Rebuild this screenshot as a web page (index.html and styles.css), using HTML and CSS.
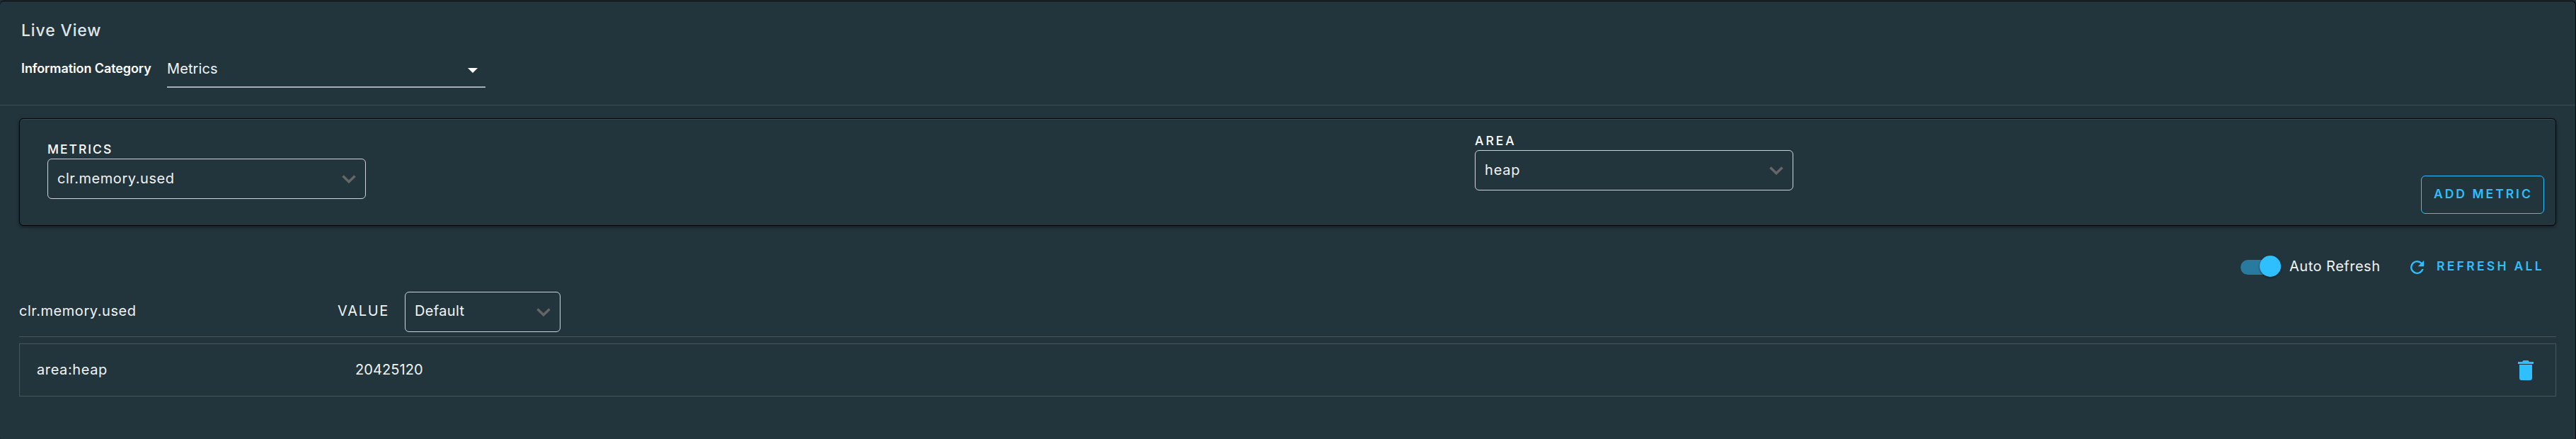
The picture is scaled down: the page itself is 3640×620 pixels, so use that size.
FILE: index.html
```html
<!DOCTYPE html>
<html lang="en">
<head>
<meta charset="utf-8">
<title>Live View</title>
<link rel="stylesheet" href="styles.css">
</head>
<body>
<main class="panel">
  <header class="head">
    <h1 class="title">Live View</h1>
    <div class="category">
      <label class="category-label">Information Category</label>
      <div class="category-select"><span class="t-category">Metrics</span><svg class="caret" viewBox="0 0 14 7"><path d="M0 0h14L7 7z"/></svg></div>
    </div>
  </header>
  <section class="body">
    <div class="card">
      <div class="field field-metrics">
        <label class="field-label">METRICS</label>
        <div class="select"><span class="t-metric">clr.memory.used</span><svg class="chevron" viewBox="0 0 20 12"><path d="M1.500 1.500 10 9.700l8.500-8.200"/></svg></div>
      </div>
      <div class="field field-area">
        <label class="field-label t-area">AREA</label>
        <div class="select"><span class="t-heap">heap</span><svg class="chevron" viewBox="0 0 20 12"><path d="M1.500 1.500 10 9.700l8.500-8.200"/></svg></div>
      </div>
      <button class="add">ADD METRIC</button>
    </div>
    <div class="actions">
      <span class="toggle"><span class="thumb"></span></span>
      <span class="auto">Auto Refresh</span>
      <svg class="refresh" viewBox="4 4 16 16"><path d="M17.650 6.350A7.958 7.958 0 0 0 12 4a8 8 0 1 0 7.730 10h-2.080A6 6 0 1 1 12 6c1.660 0 3.140.690 4.220 1.780L13 11h7V4z"/></svg>
      <span class="refresh-all">REFRESH ALL</span>
    </div>
    <div class="metric-head">
      <span class="metric-name t-metric">clr.memory.used</span>
      <span class="value-label">VALUE</span>
      <div class="select select-small"><span class="t-default">Default</span><svg class="chevron" viewBox="0 0 20 12"><path d="M1.500 1.500 10 9.700l8.500-8.200"/></svg></div>
    </div>
    <div class="row">
      <span class="row-name">area:heap</span>
      <span class="row-value">20425120</span>
      <svg class="trash" viewBox="0 0 22 28"><path d="M2 6h18v19a3 3 0 0 1-3 3H5a3 3 0 0 1-3-3zM0 2h6l1.500-2h7L16 2h6v3H0z"/></svg>
    </div>
  </section>
</main>
</body>
</html>
```
FILE: styles.css
```css
* { box-sizing: border-box; }
body { margin: 0; height: 620px; padding-top: 1px; overflow: hidden; background: #1d2c33; font-family: Inter, "Noto Sans", sans-serif; font-size: 20px; line-height: 24px; color: #f1f4f5; white-space: nowrap; }
.panel { height: 619px; border: 1px solid #000; border-width: 1px 1px 0 0; border-radius: 6px 6px 3px 3px; background: #22343c; }
.head { height: 147px; border-bottom: 1px solid #3b4b51; padding: 27px 0 0 30px; }
.title { margin: 0; font-size: 23px; font-weight: 500; line-height: 28px; letter-spacing: .85px; color: #dfe6e8; }
.category { display: flex; margin-top: 24px; }
.category-label { width: 206px; font-size: 18px; font-weight: 600; color: #fff; line-height: 32px; letter-spacing: -.1px; }
.category-select { display: flex; justify-content: space-between; width: 450px; height: 43px; border-bottom: 2px solid #a8aeb7; padding: 0 11px 0 0; line-height: 32px; }
.t-category { letter-spacing: .1px; }
.caret { width: 14px; height: 7px; margin-top: 15px; fill: #fff; }
.body { padding: 18px 27px 0; }
.card { display: flex; height: 152px; border: 1px solid #000; border-radius: 6px; box-shadow: inset 0 2px 0 -1px #3b4b51, 0 2px 4px #0006; padding: 0 16px 0 39px; }
.field { width: 2017px; padding-top: 31px; }
.field-area { flex: 1; width: auto; padding-top: 19px; }
.field-label { display: block; height: 25px; font-size: 17.5px; font-weight: 500; line-height: 24px; letter-spacing: 2px; color: #fff; }
.t-area { letter-spacing: 3px; }
.select { display: flex; justify-content: space-between; width: 450px; height: 57px; border: 1px solid #cdd4dc; border-radius: 6px; padding: 0 13px; line-height: 54px; }
.t-metric { letter-spacing: .55px; }
.t-heap { letter-spacing: .8px; }
.t-default { letter-spacing: .35px; }
.chevron { width: 20px; height: 12px; margin-top: 22px; fill: none; stroke: #666; stroke-width: 3.5; }
.add { align-self: flex-start; width: 174px; height: 54px; margin-top: 80px; padding: 0 0 3px 17px; border: 1px solid #2fbfff; border-radius: 6px; background: none; color: #2fbfff; font: 600 17.5px/48px Inter, sans-serif; letter-spacing: 3px; text-align: left; white-space: nowrap; }
.actions { display: flex; justify-content: flex-end; height: 30px; margin-top: 42px; padding-right: 20px; line-height: 30px; }
.toggle { width: 57px; height: 21px; margin-top: 6px; border-radius: 11px; background: #287b9f; }
.thumb { display: block; width: 30px; height: 30px; margin: -6px 0 0 27px; border-radius: 50%; background: #2fbfff; box-shadow: 0 1px 3px #0008; }
.auto { width: 171px; padding-left: 12px; letter-spacing: .5px; }
.refresh { width: 19px; height: 19px; margin: 7px 18px 0 12px; fill: #2fbfff; }
.refresh-all { width: 149px; font-size: 17.5px; font-weight: 600; line-height: 29px; letter-spacing: 3.3px; color: #2fbfff; }
.metric-head { display: flex; height: 64px; margin-top: 21px; border-bottom: 1px solid #4d5356; line-height: 54px; }
.metric-name { width: 450px; }
.value-label { width: 95px; letter-spacing: 1.7px; }
.select-small { width: 220px; padding-left: 13px; line-height: 52px; }
.row { display: flex; height: 75px; margin-top: 9px; border: 1px solid #4d5356; padding-left: 24px; line-height: 72px; }
.row-name { width: 450px; letter-spacing: .6px; }
.row-value { flex: 1; letter-spacing: .1px; }
.trash { width: 22px; height: 28px; margin: 23px 31px 0 0; fill: #2fbfff; }
```
